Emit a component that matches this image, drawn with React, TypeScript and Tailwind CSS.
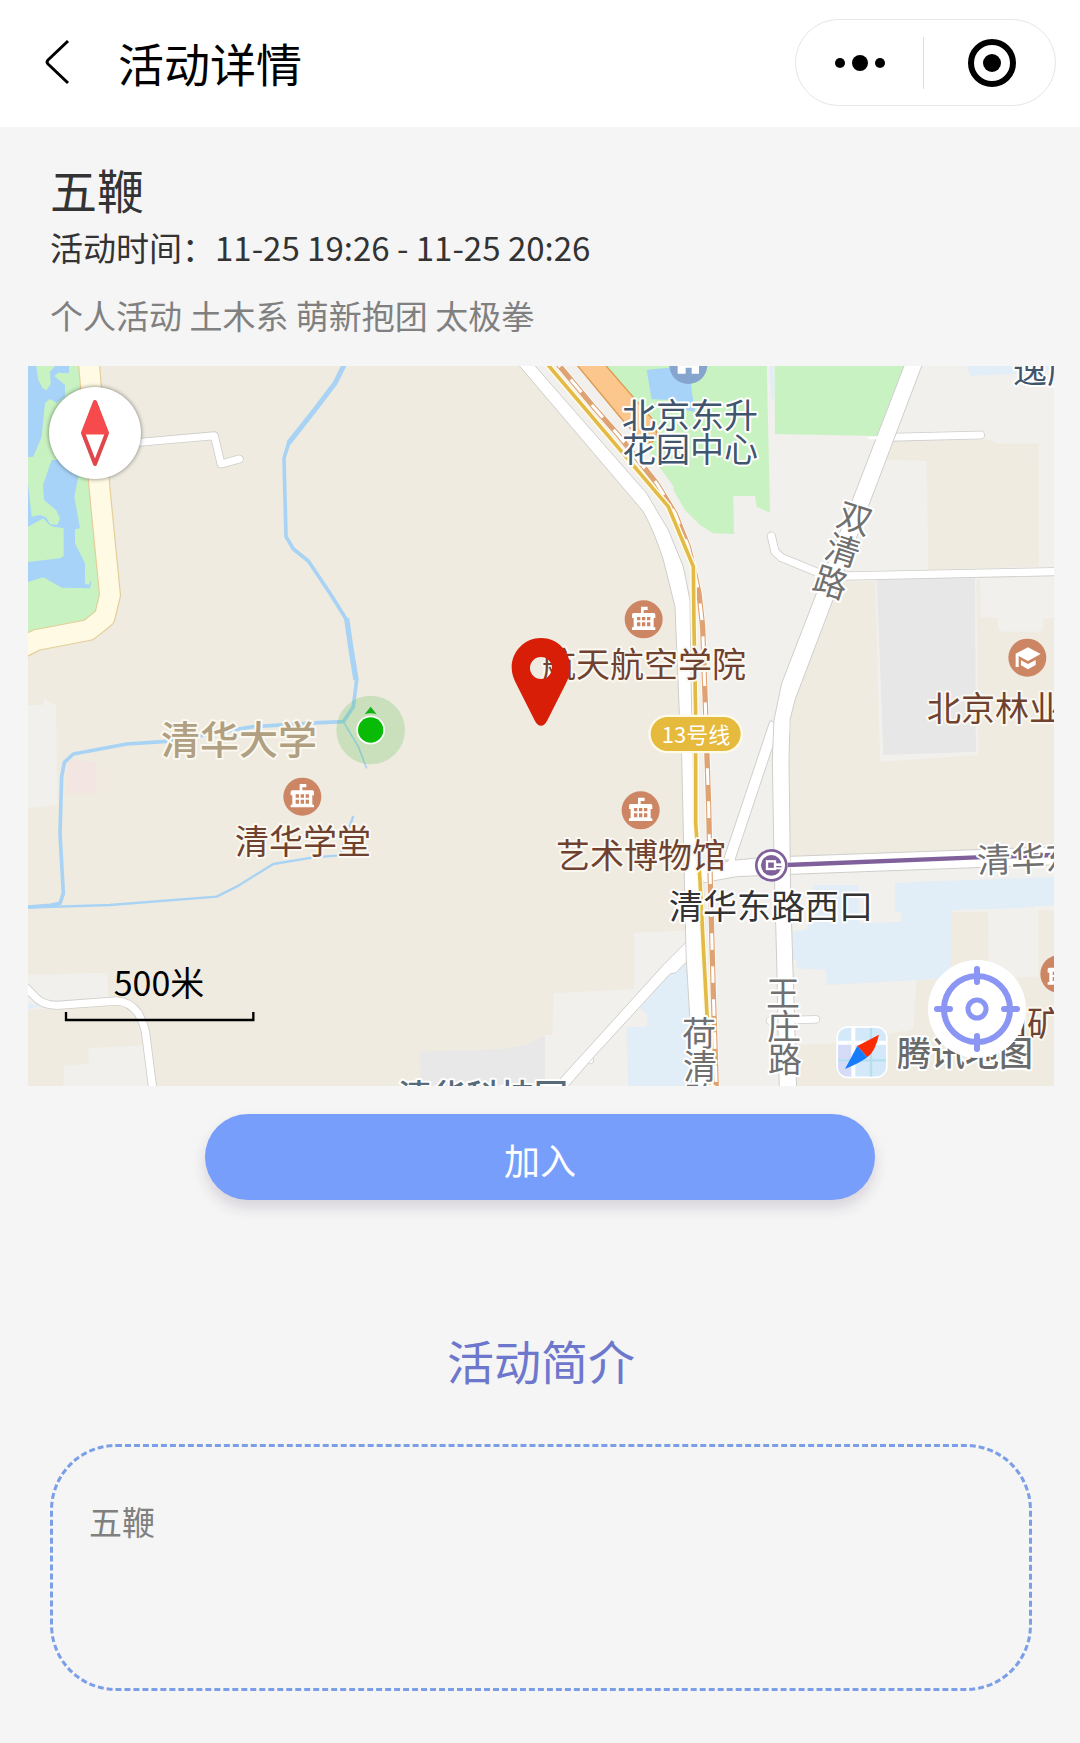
import React from "react";

type Point = [number, number];

function Museum({ at }: { at: Point }) {
  return (
    <g transform={`translate(${at[0]} ${at[1]})`}>
      <circle r="57" fill="#cd8664" />
      <path
        fill="#fff"
        d="M-8-38H12V-28H0V-19H30Q35-19 35-14V-4H30V24H35V32H-35V24H-30V-4H-35V-14Q-35-19-30-19H-8Z"
      />
      <path
        fill="#cd8664"
        d="M-20-7h10v10h-10zM-5-7h10v10H-5zM10-7h10v10H10zM-20 9h10v12h-10zM-5 9h10v12H-5zM10 9h10v12H10z"
      />
    </g>
  );
}

function School({ at }: { at: Point }) {
  return (
    <g transform={`translate(${at[0]} ${at[1]})`}>
      <circle r="57" fill="#cd8664" />
      <path fill="#fff" d="M2-31L40-11L2 10L-26-5V28H-35V-12Z" />
      <path fill="#fff" d="M-19 8L2 19L25 7V22L2 35L-19 23Z" />
    </g>
  );
}

function Road({ d, width = 24 }: { d: string; width?: number }) {
  return (
    <g fill="none" strokeLinecap="round" strokeLinejoin="round">
      <path d={d} stroke="#cfcecb" strokeWidth={width + 5} />
      <path d={d} stroke="#fff" strokeWidth={width} />
    </g>
  );
}

const RAIL =
  "M1612 10L1720 140L1795 225L1910 370L1965 460L2005 560L2022 630L2037 700L2048 800L2053 950L2057 1060L2061 1190L2066 1340L2071 1570L2080 1900L2089 2190";
const LINE_13 =
  "M1580 10L1945 440L2020 620L2022 800L2027 1060V1390L2040 1560L2050 1760L2062 1980L2068 2190";
const WEST_ROAD = "M206 0L240 400L270 705L254 772L206 810L50 840L0 865";

function MapGround() {
  return (
    <g transform="translate(20 360) scale(0.33333)">
      <rect x="0" y="0" width="3200" height="2220" fill="#efebe0" />

      {/* built-up area east of the main road */}
      <path
        fill="#f1f0ed"
        d="M1520 0H3200V2220H1575V2025H1598L1600 1900L1843 1887V1718L1997 1712V1000L1980 700L1880 440Z"
      />
      <path
        fill="#f1f0ed"
        d="M24 1035H70L72 1018L108 1035L112 1335L24 1345ZM24 1845L262 1838L265 1930L24 1950ZM205 2065L385 2055L400 2200H130L132 2118L207 2110Z"
      />
      <path fill="#e2eef7" d="M24 1930L75 1935L24 1948Z" />
      <path fill="#f3e5e1" d="M145 1200L228 1205L230 1298L140 1300Z" />
      <path fill="#e8e8e8" d="M1198 2075L1440 2068L1520 2055L1575 2025V2200H1205Z" />

      {/* west park and lakes */}
      <path fill="#c8f2c1" d="M0 0H190L240 400L250 740L210 790L0 840Z" />
      <path
        fill="#a7d3f8"
        d="M0 0H46L55 60L68 85L80 90L92 72L90 35L105 18H147V40L115 38L103 48L135 75V110L110 130L100 122L88 117L75 130L65 230L40 290L0 292Z"
      />
      <path
        fill="#a7d3f8"
        d="M95 300H180L175 350L163 410L180 505L165 508V550L195 610V670L205 675L215 660L210 685L125 683L70 652L24 666V606L120 595L131 588V505L100 500L88 495L70 475L24 500V370L35 470L60 465L78 472L90 492L112 495L120 475L108 450L72 420L69 375Z"
      />
      <g fill="none" strokeLinejoin="round">
        <path d={WEST_ROAD} stroke="#e5cd98" strokeWidth="66" />
        <path d={WEST_ROAD} stroke="#fffae3" strokeWidth="59" />
      </g>

      {/* streams */}
      <g fill="none" stroke="#a9d3f4" strokeLinejoin="round">
        <path strokeWidth="15" d="M980 0L945 70L880 155L805 250" />
        <path
          strokeWidth="11"
          d="M807 246L792 295L798 530L820 567L865 603L930 700L980 780L1010 960L1000 1040L970 1085L900 1088L700 1100L540 1127L430 1145L320 1152L160 1182L133 1207L125 1250L120 1420L130 1600L120 1630L90 1636L24 1641"
        />
        <path strokeWidth="16" d="M980 775L992 860L1008 960" />
        <path strokeWidth="7" d="M24 1643L270 1635L590 1610L650 1580L760 1512L880 1492L960 1486L985 1410L1000 1368" />
        <path strokeWidth="5" d="M970 1085L1015 1160L1040 1225" />
      </g>

      {/* central park */}
      <path
        fill="#c8f2c1"
        d="M1740 0H2240L2245 230L2250 458L2210 440L2205 408H2140L2142 522L2080 520L2040 495L1995 450L1960 390V378L1925 330L1890 290L1900 220Z"
      />
      <path fill="#a7d3f8" d="M1880 30L1905 27L2010 18L2015 90L2025 155L1995 150L1960 120L1895 118Z" />
      <path fill="#c8f2c1" d="M2264 0H2660L2570 228L2265 222Z" />
      <path fill="#e2eef7" d="M2248 18H2262V118H2253ZM2835 0H3200V18L3000 40L2850 48Z" />
      <path
        fill="#fcc78c"
        stroke="#dd9a4e"
        strokeWidth="4"
        d="M1665 8H1750L1830 100L1900 180Q1920 225 1898 245L1880 250L1820 195Z"
      />

      {/* north-east blocks */}
      <path fill="#efebe0" d="M2610 245L2900 238L2935 250H3055L3057 620L2725 630L2720 303L2590 300Z" />
      <path fill="#efebe0" d="M2430 665L3200 655V1470L2310 1490V1080L2325 1020Z" />
      <path fill="#f1f0ed" d="M2566 655L2870 650L2875 1185L2580 1205Z" />
      <path fill="#e7e7e7" d="M2570 655L2865 655L2868 1175L2590 1185Z" />
      <path fill="#f1f0ed" d="M2880 655H3200V770L3070 775V805L3060 815H2945L2935 805V775L2882 772Z" />

      {/* south-east blocks */}
      <path
        fill="#e1edf7"
        d="M2380 1575H2515L2517 1690L2645 1685L2642 1655H2625V1570L2700 1565L3200 1548V1628L2980 1645L2795 1650L2793 1855L2420 1875L2418 1830L2330 1825V1800H2315L2318 1715L2360 1710L2365 1693L2380 1690Z"
      />
      <path fill="#efebe0" d="M2800 1655H2905L2907 1855H2792L2793 1670Z" />
      <path
        fill="#efebe0"
        d="M3055 1650H3200V2220H2330V2055L2450 2050L2680 2008L2690 1860L2907 1855L3055 1850Z"
      />
      <path
        fill="#e1edf7"
        d="M1945 1845L1999 1800L2020 2200H1825L1820 2002L1880 2000L1883 1965L1860 1945Z"
      />

      {/* small streets */}
      <Road d="M300 252L583 227L603 312L658 297" width={21} />
      <Road d="M0 1865L40 1905Q65 1936 110 1936L290 1923Q330 1925 355 1960Q375 2000 377 2020L400 2200" width={22} />
      <Road d="M2254 528L2265 575L2285 593L2400 640L2480 648L3200 633" width={22} />
      <Road d="M2610 232L2882 225" width={21} />
      <Road d="M2250 1982L2388 1978" width={20} />
      <Road d="M1705 2085L1710 2101" width={18} />

      {/* arterial roads */}
      <g fill="#fff" stroke="#cfcecb" strokeWidth="3">
        <path d="M2250 1082L2280 1095L2145 1500L2110 1500Z" />
        <path d="M2050 1520L2130 1502L2200 1495L2310 1489L3200 1457V1511L2310 1543L2150 1550L2045 1569Z" />
        <path d="M2010 1735L1930 1815L1590 2190L1635 2190L1722 2090L1950 1842L1968 1838L2010 1795Z" />
        <path d="M2659 0L2285 970L2262 1080L2257 1200L2262 1500L2270 1800L2278 2190H2330L2312 1600L2307 1200L2310 1080L2325 1020L2712 0Z" />
        <path d="M1483 0L1870 455Q1905 520 1930 600L1965 740L1978 1060L1985 1185L1997 1730L1999 1800L2010 1980L2015 2190H2075L2050 1560L2025 1400L2018 1185L2015 1060L2010 720L1990 620L1945 510L1880 400L1530 0Z" />
      </g>
      <path fill="#fff" d="M2000 1740L2010 1720V1800L2001 1795ZM2030 1530L2070 1520V1558L2030 1566ZM2264 1491H2309V1542H2264ZM2130 1497L2145 1492V1510H2120ZM2266 1080H2308V1120H2266ZM2295 1974H2325V1988H2295ZM2540 232L2612 225V238H2550ZM2385 640L2430 640V656L2385 652Z" />

      {/* railway and metro lines */}
      <g fill="none" strokeLinejoin="round">
        <path d={RAIL} stroke="#fff" strokeWidth="20" />
        <path d={RAIL} stroke="#dfa373" strokeWidth="16" />
        <path d={RAIL} stroke="#fff" strokeWidth="9" strokeDasharray="50 49" strokeDashoffset="36" />
        <path d={LINE_13} stroke="#fffbe9" strokeWidth="20" />
        <path d={LINE_13} stroke="#e3ba45" strokeWidth="11" />
        <path d="M2300 1515L2870 1492L3200 1482" stroke="#fff" strokeWidth="20" />
        <path d="M2300 1515L2870 1492L3200 1482" stroke="#80609a" strokeWidth="13" />
      </g>

      {/* points of interest */}
      <g transform="translate(2005 15)">
        <circle r="57" fill="#86a5ce" />
        <path fill="#fff" d="M-32-10H32V26H10V8H-8V26H-32Z" />
      </g>
      <Museum at={[1871, 778]} />
      <Museum at={[847, 1310]} />
      <Museum at={[1862, 1351]} />
      <School at={[3022, 893]} />
      <Museum at={[3118, 1842]} />
      <g transform="translate(2254 1516)" fill="none" stroke="#80609a">
        <circle r="50" fill="#fff" stroke="none" />
        <circle r="45" strokeWidth="8" />
        <circle r="31" fill="#80609a" stroke="none" />
        <circle r="24" strokeWidth="4" />
        <rect x="-13" y="-12" width="24" height="23" stroke="#fff" strokeWidth="7" />
        <path stroke="#fff" strokeWidth="8" d="M12-2H34" />
        <path stroke="#fff" strokeWidth="6" d="M14 9H30" />
      </g>
      <rect x="1885" y="1064" width="284" height="116" rx="58" fill="#fffbe9" />
      <rect x="1892" y="1071" width="270" height="102" rx="51" fill="#e6ba3d" />
    </g>
  );
}

type Label = {
  text: string;
  x: number;
  y: number;
  tone: string;
  anchor?: "start" | "middle";
  turn?: number;
};

const BROWN = "fill-[#6f4230] stroke-[#fbf8f2]";
const SLATE = "fill-[#40566e] stroke-white";
const STREET = "fill-[#707070] stroke-white";

const LABELS: Label[] = [
  { text: "北京东升", x: 690, y: 428, tone: SLATE },
  { text: "花园中心", x: 690, y: 462, tone: SLATE },
  { text: "逸度", x: 1013, y: 383, tone: SLATE, anchor: "start" },
  { text: "航天航空学院", x: 644, y: 677, tone: BROWN },
  { text: "清华学堂", x: 303, y: 854, tone: BROWN },
  { text: "艺术博物馆", x: 641, y: 868, tone: BROWN },
  { text: "北京林业", x: 927, y: 721, tone: BROWN, anchor: "start" },
  { text: "国矿", x: 993, y: 1036, tone: BROWN, anchor: "start" },
  { text: "双", x: 855, y: 531, tone: STREET, turn: 18 },
  { text: "清", x: 843, y: 563, tone: STREET, turn: 18 },
  { text: "路", x: 831, y: 595, tone: STREET, turn: 18 },
  { text: "王", x: 783, y: 1006, tone: STREET },
  { text: "庄", x: 784, y: 1039, tone: STREET },
  { text: "路", x: 785, y: 1072, tone: STREET },
  { text: "荷", x: 699, y: 1046, tone: STREET },
  { text: "清", x: 700, y: 1079, tone: STREET },
  { text: "路", x: 701, y: 1112, tone: STREET },
  { text: "清华东", x: 977, y: 873, tone: STREET, anchor: "start", turn: -2 },
  { text: "清华东路西口", x: 771, y: 919, tone: "fill-[#333333] stroke-white" },
  { text: "500米", x: 159, y: 996, tone: "fill-black stroke-transparent" },
];

function MapLabels() {
  return (
    <g className="stroke-[4px] text-[34px]" paintOrder="stroke" strokeLinejoin="round">
      {LABELS.map(({ text, x, y, tone, anchor = "middle", turn = 0 }) => (
        <text
          key={`${text}-${x}`}
          x={x}
          y={y}
          textAnchor={anchor}
          className={tone}
          transform={turn ? `rotate(${turn} ${x} ${y - 13})` : undefined}
        >
          {text}
        </text>
      ))}
      <g className="font-medium">
        <text x="239" y="754" textAnchor="middle" className="fill-[#b0a081] stroke-[#fbf8f0] text-[39px]">
          清华大学
        </text>
        <text x="483" y="1109" textAnchor="middle" className="fill-[#566b7c] stroke-white">
          清华科技园
        </text>
        <text x="965" y="1066" textAnchor="middle" className="fill-[#6a6a6a] stroke-white">
          腾讯地图
        </text>
      </g>
      <text x="696" y="743" textAnchor="middle" className="fill-white stroke-transparent text-[22px]">
        13号线
      </text>
    </g>
  );
}

function MapMarks() {
  return (
    <g transform="translate(20 360) scale(0.33333)">
      {/* scale bar */}
      <path d="M138 1956V1980H700V1956" fill="none" stroke="#000" strokeWidth="7" />

      {/* current position */}
      <circle cx="1052" cy="1110" r="103" fill="#1fb01f" fillOpacity="0.18" />
      <path d="M1052 1040L1070 1063Q1052 1056 1034 1063Z" fill="#13b113" />
      <circle cx="1052" cy="1110" r="43" fill="#fff" />
      <circle cx="1052" cy="1110" r="38" fill="#09bb07" />

      {/* destination pin, hollow in the middle */}
      <path
        fill="#d81e06"
        fillRule="evenodd"
        d="M1563 834C1612 834 1651 874 1651 922C1651 942 1645 956 1637 972L1581 1083C1572 1102 1554 1102 1545 1083L1489 972C1481 956 1475 942 1475 922C1475 874 1514 834 1563 834ZM1563 891A33 33 0 1 0 1563 957A33 33 0 1 0 1563 891Z"
      />

      {/* map vendor badge */}
      <rect x="2449" y="1998" width="154" height="157" rx="36" fill="#fff" />
      <clipPath id="badge">
        <rect x="2454" y="2003" width="144" height="147" rx="30" />
      </clipPath>
      <g clipPath="url(#badge)">
        <rect x="2454" y="2003" width="144" height="147" fill="#d3e8f8" />
        <rect x="2454" y="2052" width="46" height="98" fill="#d6dcf8" />
        <path d="M2500 2003V2150M2454 2048H2598" stroke="#fff" strokeWidth="12" />
        <path d="M2553 2003V2150M2454 2101H2598" stroke="#b5dfee" strokeWidth="7" />
      </g>
      <path d="M2577 2024L2512 2058L2542 2092Q2566 2074 2577 2024Z" fill="#fa2c05" />
      <path d="M2475 2127L2512 2058L2542 2092Q2518 2110 2475 2127Z" fill="#167cfb" />
    </g>
  );
}

function ActivityMap() {
  return (
    <section aria-label="活动地图" className="relative mt-[29px] mr-[26px] ml-7 h-[720px] overflow-hidden">
      <svg viewBox="28 366 1026 720" preserveAspectRatio="xMidYMid slice" className="block h-full w-full">
        <MapGround />
        <MapLabels />
        <MapMarks />
      </svg>
      <button
        type="button"
        aria-label="指北"
        className="absolute top-[21px] left-[21px] size-[92px] rounded-full bg-white shadow-[0_0_4px_rgba(0,0,0,0.5)]"
      >
        <svg viewBox="0 0 92 92" className="size-full" strokeLinejoin="round">
          <path d="M46 15L58 46L46 77L34 46Z" fill="#fff" stroke="#df474b" strokeWidth="4" />
          <path d="M46 15L58 46H34Z" fill="#f64a4c" stroke="#f64a4c" strokeWidth="3" />
        </svg>
      </button>
      <button
        type="button"
        aria-label="定位"
        className="absolute right-7 bottom-7 size-[98px] rounded-full bg-white"
      >
        <svg viewBox="0 0 98 98" className="size-full" fill="none" stroke="#8a95f4" strokeLinecap="round">
          <circle cx="49" cy="49" r="33" strokeWidth="6" />
          <circle cx="49" cy="49" r="9" strokeWidth="5" />
          <path d="M49 9V22M49 76V89M9 49H22M76 49H89" strokeWidth="6" />
        </svg>
      </button>
    </section>
  );
}

function Header() {
  return (
    <header className="flex h-[127px] items-center bg-white pr-6 pb-[2px] pl-10 text-black">
      <button type="button" aria-label="返回" className="flex h-16 w-10 items-center">
        <svg viewBox="0 0 40 64" className="h-16 w-10" fill="none" stroke="currentColor" strokeWidth="3">
          <path d="M28 10L8 29Q6 31 8 33L28 52" />
        </svg>
      </button>
      <h1 className="ml-[38px] pb-[2px] text-[46px] leading-none">活动详情</h1>
      <div className="ml-auto flex h-[87px] w-[261px] items-center rounded-full border border-[#e6e6e6]">
        <button type="button" aria-label="更多" className="flex h-full flex-1 items-center justify-center">
          <svg viewBox="0 0 52 18" className="h-[18px] w-[52px]" fill="currentColor">
            <circle cx="6" cy="9" r="5" />
            <circle cx="26" cy="9" r="8" />
            <circle cx="46" cy="9" r="5" />
          </svg>
        </button>
        <span className="h-[52px] w-px bg-[#dddddd]" />
        <button type="button" aria-label="关闭" className="flex h-full flex-1 items-center justify-center pl-1">
          <svg viewBox="0 0 48 48" className="size-12" fill="none">
            <circle cx="24" cy="24" r="21" stroke="currentColor" strokeWidth="6" />
            <circle cx="24" cy="24" r="9" fill="currentColor" />
          </svg>
        </button>
      </div>
    </header>
  );
}

export default function App() {
  return (
    <div className="min-h-screen bg-[#f5f5f5] pb-[51px] font-['Noto_Sans_CJK_SC',sans-serif] text-[33px] leading-[44px]">
      <Header />
      <main>
        <section className="px-[50px] pt-[30px]">
          <h2 className="text-[47px] leading-[64px] text-[#333333]">五鞭</h2>
          <p className="mt-1 text-[#333333]">活动时间：11-25 19:26 - 11-25 20:26</p>
          <p className="mt-6 text-[#808080]">个人活动 土木系 萌新抱团 太极拳</p>
        </section>
        <ActivityMap />
        <button
          type="button"
          className="mx-auto mt-7 flex h-[86px] w-[62%] items-center justify-center rounded-full bg-[#789efc] pt-1 text-[36px] text-white shadow-[0_8px_14px_rgba(60,40,80,0.16)]"
        >
          加入
        </button>
        <section className="pt-32 pr-12 pl-[50px]">
          <h2 className="text-center text-[47px] leading-[64px] text-[#6d78cc]">活动简介</h2>
          <div className="mt-[52px] min-h-[247px] rounded-[66px] border-[3px] border-dashed border-[#7b9fe6] px-9 py-[52px] text-[#808080]">
            五鞭
          </div>
        </section>
      </main>
    </div>
  );
}
